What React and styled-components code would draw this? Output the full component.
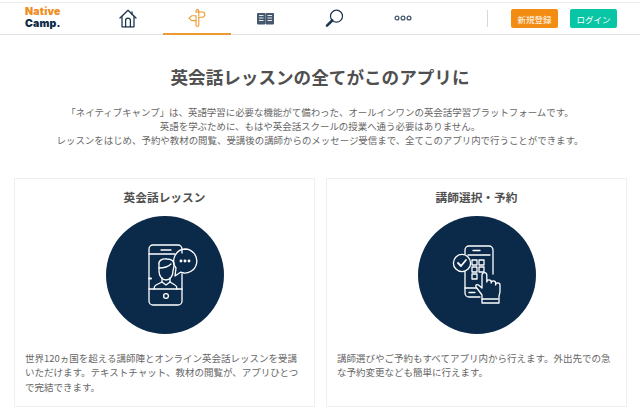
import React from "react";
import styled, { createGlobalStyle } from "styled-components";

const Global = createGlobalStyle`
  html, body { margin: 0; padding: 0; background: #fff; }
  body { font-family: "Noto Sans CJK JP", "Liberation Sans", sans-serif; width: 640px; height: 420px; overflow: hidden; }
`;
const Page = styled.div`padding-top: 2px;`;
const Header = styled.header`
  display: flex; align-items: stretch; height: 31px;
  border-top: 1px solid #ececec; border-bottom: 1px solid #e2e2e2;
`;
const Logo = styled.div`
  width: 94px; box-sizing: border-box; padding: 3px 0 0 25px;
  font-family: Inter, "Liberation Sans", sans-serif; font-weight: 900; font-size: 10.5px; line-height: 12px;
  letter-spacing: 0.2px; color: #0c2a49;
  span { display: block; color: #f08c1e; }
`;
const Nav = styled.nav`display: flex;`;
const NavItem = styled.div`
  width: 68.6px; display: flex; align-items: center; justify-content: center; box-sizing: border-box;
  border-bottom: 2px solid ${p => (p.$active ? "#ec9a32" : "transparent")};
  margin-bottom: -1px;
`;
const Divider = styled.div`width: 1px; height: 17px; align-self: center; background: #d8d8d8; margin-left: 50px;`;
const Buttons = styled.div`display: flex; align-items: center; gap: 12px; margin-left: 23px;`;
const Btn = styled.div`
  width: 47px; height: 19px; border-radius: 2px; background: ${p => p.$bg}; color: #fff;
  font-size: 8.5px; display: flex; align-items: center; justify-content: center;
`;
const Intro = styled.section`text-align: center; color: #555;`;
const Title = styled.h1`
  margin: 30px 0 0; font-size: 17.6px; line-height: 24px; font-weight: 700; color: #505050;
`;
const Lead = styled.p`
  margin: 16px 0 0; font-size: 9.45px; line-height: 14.2px; color: #666;
`;
const Cards = styled.div`
  display: grid; grid-template-columns: 301px 301px; gap: 11px; margin: 30px 0 0 14px;
`;
const Card = styled.article`
  height: 229px; box-sizing: border-box; border: 1px solid #f0f0f0; padding: 9px 10px 0;
  display: flex; flex-direction: column; align-items: center;
`;
const CardTitle = styled.h2`
  margin: 0; font-size: 11.7px; line-height: 17px; font-weight: 700; color: #505050;
`;
const Circle = styled.div`
  width: 118px; height: 118px; border-radius: 50%; background: #0b2a4a; margin-top: 11px; flex: none;
  svg { display: block; }
`;
const Desc = styled.p`
  margin: 17px 0 0; align-self: stretch; font-size: 9.5px; line-height: 14.5px; color: #666;
`;

const Stroke = { fill: "none", strokeLinecap: "round", strokeLinejoin: "round" };

const HomeIcon = () => (
  <svg width="18" height="19" viewBox="0 0 18 19" {...Stroke} stroke="#1c3550" strokeWidth="1.3">
    <path d="M1 9 L9 1.2 L17 9" />
    <path d="M3 7.5 V17.8 H15 V7.5" />
    <path d="M6.6 17.8 V11.5 a2.4 2.4 0 0 1 4.8 0 V17.8" />
    <path d="M13 3 V5.5" />
  </svg>
);
const PostIcon = () => (
  <svg width="18" height="18" viewBox="0 0 18 18" {...Stroke} stroke="#ec9a32" strokeWidth="1.1">
    <path d="M8 3 V2 a1.4 1.4 0 0 1 2.8 0 V3 M10.8 8.2 V16 a1.4 1.4 0 0 1 -2.8 0 V11.6" />
    <path d="M8 3 H14.2 a2.6 2.6 0 0 1 0 5.2 H10.8" />
    <path d="M10.8 6.8 V3 M8 6.8 H3.6 L1 9.2 L3.6 11.6 H8 V6.8 Z" />
  </svg>
);
const BookIcon = () => (
  <svg width="17" height="13" viewBox="0 0 17 13">
    <path d="M0.5 1.5 H8 V12 H0.5 Z M9 1.5 H16.5 V12 H9 Z" fill="#46596e" stroke="#46596e" />
    <path d="M2 3.5 H6.5 M2 6 H6.5 M2 8.5 H6.5 M10.5 3.5 H15 M10.5 6 H15 M10.5 8.5 H15" stroke="#e5e9ee" strokeWidth="1" />
  </svg>
);
const SearchIcon = () => (
  <svg width="19" height="19" viewBox="0 0 19 19" {...Stroke} stroke="#1c3550" strokeWidth="1.2">
    <circle cx="11.5" cy="7.2" r="6" />
    <path d="M7.2 11.5 L2 16.6" strokeWidth="2.6" />
  </svg>
);
const DotsIcon = () => (
  <svg width="18" height="6" viewBox="0 0 18 6" fill="none" stroke="#46596e" strokeWidth="1.3">
    <circle cx="3" cy="3" r="1.9" /><circle cx="9" cy="3" r="1.9" /><circle cx="15" cy="3" r="1.9" />
  </svg>
);

const LessonArt = () => (
  <svg width="118" height="118" viewBox="0 0 118 118" {...Stroke} stroke="#fff" strokeWidth="1.3">
    <path d="M76 37 V33 a4 4 0 0 0 -4 -4 H47 a4 4 0 0 0 -4 4 V85 a4 4 0 0 0 4 4 H72 a4 4 0 0 0 4 -4 V58" />
    <path d="M43 38 H69 M43 73 H76 M55 34 H65" />
    <circle cx="60" cy="80" r="2.4" />
    <path d="M43 62.5 H45" strokeWidth="2" />
    <path d="M79 33 a12 12 0 1 1 -4.5 23.2 L69 60 L70 52 A12 12 0 0 1 79 33 Z" />
    <circle cx="75" cy="45" r=".8" fill="#fff" /><circle cx="79" cy="45" r=".8" fill="#fff" /><circle cx="83" cy="45" r=".8" fill="#fff" />
    <path d="M53 49 c-1 -4 3 -7 8 -6 c4 0 7 2 7 6 c0 3 -1 5 -1 6 c0 5 -3 9 -7 9 c-4 0 -7 -4 -7 -9 Z" />
    <path d="M53 52 c4 0 9 -1 12 -4" />
    <path d="M56 62 V66 L50 69 c-2 1 -2 2 -2 4 M64 62 V66 L69 69 c2 1 2 2 2 4" />
    <path d="M56 66 l4 3 l4 -3" />
  </svg>
);
const BookingArt = () => (
  <svg width="118" height="118" viewBox="0 0 118 118" {...Stroke} stroke="#fff" strokeWidth="1.3">
    <path d="M47 38 V34 a4 4 0 0 1 4 -4 H71 a4 4 0 0 1 4 4 V58" />
    <path d="M47 56 V77 a4 4 0 0 0 4 4 H62" />
    <path d="M50 39 H72 M47 72 H60 M51 76.5 H57 M55 34.5 H62" />
    <circle cx="44" cy="47" r="8.6" fill="#0b2a4a" />
    <path d="M40 47 l3 3 l5 -6" strokeWidth="1.8" />
    <rect x="54" y="44" width="5" height="5" />
    <rect x="61" y="44" width="5" height="5" />
    <rect x="54" y="51" width="5" height="5" />
    <rect x="61" y="51" width="5" height="5" />
    <rect x="54" y="58" width="5" height="5" />
    <path d="M64 87 V79 L58 71 c-1 -2 1 -3 2.5 -2 L64 72 V59 a2.4 2.4 0 0 1 4.8 0 V66 a2.2 2.2 0 0 1 4.4 0 V67 a2.2 2.2 0 0 1 4.4 0 V69 a2.2 2.2 0 0 1 4.4 0 V75 c0 2 -.5 3 -1 5 V87 Z" fill="#0b2a4a" />
    <path d="M64 83 H80" />
  </svg>
);

export default function App() {
  return (
    <Page>
      <Global />
      <Header>
        <Logo><span>Native</span>Camp.</Logo>
        <Nav>
          <NavItem><HomeIcon /></NavItem>
          <NavItem $active><PostIcon /></NavItem>
          <NavItem><BookIcon /></NavItem>
          <NavItem><SearchIcon /></NavItem>
          <NavItem><DotsIcon /></NavItem>
        </Nav>
        <Divider />
        <Buttons>
          <Btn $bg="#f28c13">新規登録</Btn>
          <Btn $bg="#08c5a5">ログイン</Btn>
        </Buttons>
      </Header>
      <Intro>
        <Title>英会話レッスンの全てがこのアプリに</Title>
        <Lead>
          「ネイティブキャンプ」は、英語学習に必要な機能がて備わった、オールインワンの英会話学習プラットフォームです。<br />
          英語を学ぶために、もはや英会話スクールの授業へ通う必要はありません。<br />
          レッスンをはじめ、予約や教材の閲覧、受講後の講師からのメッセージ受信まで、全てこのアプリ内で行うことができます。
        </Lead>
      </Intro>
      <Cards>
        <Card>
          <CardTitle>英会話レッスン</CardTitle>
          <Circle><LessonArt /></Circle>
          <Desc>世界120ヵ国を超える講師陣とオンライン英会話レッスンを受講いただけます。テキストチャット、教材の閲覧が、アプリひとつで完結できます。</Desc>
        </Card>
        <Card>
          <CardTitle>講師選択・予約</CardTitle>
          <Circle><BookingArt /></Circle>
          <Desc>講師選びやご予約もすべてアプリ内から行えます。外出先での急な予約変更なども簡単に行えます。</Desc>
        </Card>
      </Cards>
    </Page>
  );
}
